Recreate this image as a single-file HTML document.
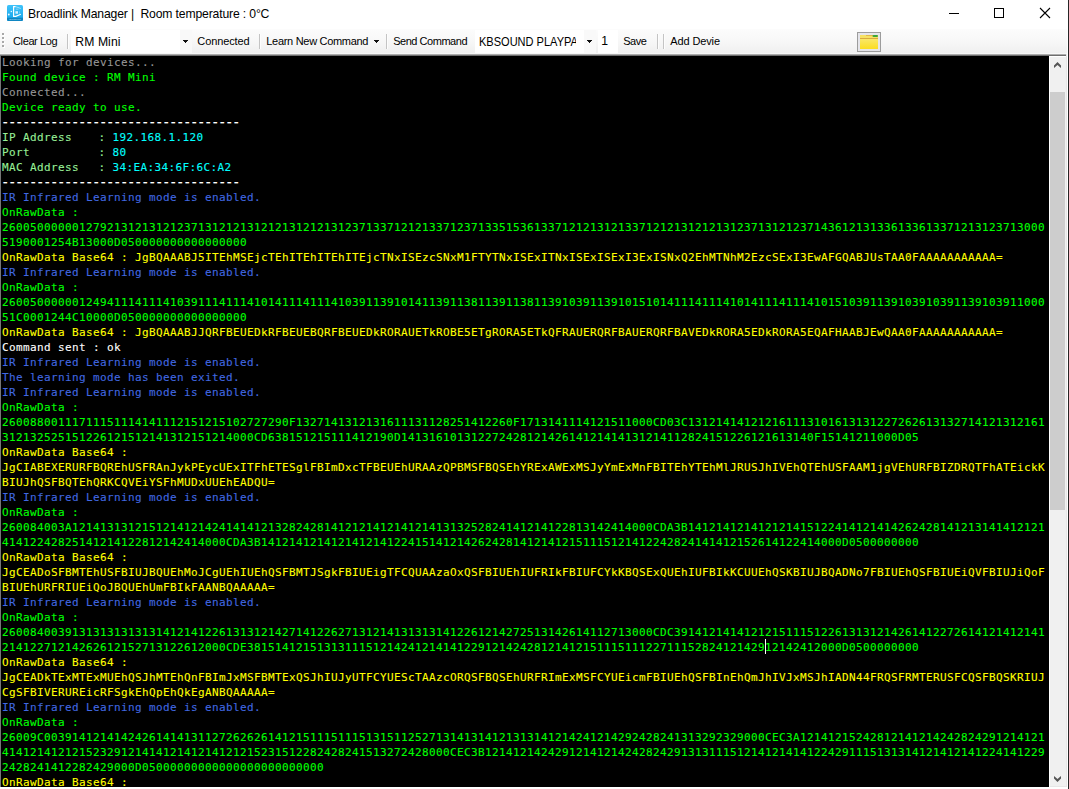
<!DOCTYPE html>
<html><head><meta charset="utf-8"><title>Broadlink Manager</title>
<style>
html,body{margin:0;padding:0;}
body{width:1069px;height:789px;overflow:hidden;background:#fff;position:relative;font-family:"Liberation Sans",sans-serif;font-size:12px;color:#000;}
.abs{position:absolute;}
#title{left:28.1px;top:7.2px;font-size:12.2px;white-space:pre;letter-spacing:-0.155px;line-height:15px;}
#tb{left:0;top:29px;width:1067px;height:24px;background:linear-gradient(#fcfcfc 0%,#f8f8f8 45%,#f0f0f0 100%);}
#tbline{left:0;top:53px;width:1067px;height:3px;background:linear-gradient(#f7f7f7 0,#f7f7f7 33.3%,#acacac 33.3%,#acacac 66.6%,#6e6e6e 66.6%);}
.ti{position:absolute;top:34px;line-height:14px;font-size:11px;white-space:pre;letter-spacing:-0.2px;}
.tc{font-size:12.2px;top:35px;letter-spacing:0}
.sep{position:absolute;top:34px;width:1px;height:15px;background:#c4c4c4;box-shadow:1px 0 0 #fdfdfd;}
.cb{position:absolute;top:30px;height:23px;background:#fff;}

#con{left:1px;top:56px;width:1048px;height:731px;background:#000;overflow:hidden;}
#txt{position:absolute;left:1px;top:-1px;font-family:"DejaVu Sans Mono","Liberation Mono",monospace;font-size:11px;letter-spacing:0.378px;line-height:15px;}
#txt div{height:15px;white-space:pre;-webkit-text-stroke:0.1px currentColor;}
.t{display:inline-block;width:96.5px}
#txt div.d{font-size:14px;letter-spacing:-1.428px;position:relative;top:0.2px;left:-1px}
.s{color:#969696}.p{color:#98f098}.g{color:#00ff00}.w{color:#fff}.c{color:#00ffff}.b{color:#4169e1}.y{color:#ffff00}
#sb{left:1050px;top:57px;width:16px;height:730px;background:#f0f0f0;}
#thumb{left:1050px;top:92px;width:15px;height:418px;background:#cdcdcd;}
</style></head><body>
<!-- title bar -->
<svg class="abs" style="left:7px;top:5px" width="16" height="16" viewBox="0 0 16 16">
<defs><linearGradient id="ig" x1="0" y1="0" x2="0" y2="1"><stop offset="0" stop-color="#3fc3fa"/><stop offset="1" stop-color="#15a3e8"/></linearGradient></defs>
<rect x="0" y="0" width="16" height="16" rx="1.6" fill="url(#ig)"/>
<path d="M0 12.7 H16 V14.4 Q16 16 14.4 16 H1.6 Q0 16 0 14.4 Z" fill="#0f86c2"/>
<text x="8" y="15.1" font-family="Liberation Sans,sans-serif" font-size="2.3" font-weight="bold" fill="#8fcdec" text-anchor="middle">BroadLink</text>
<path d="M8.6 1.6 H6.6 V11.4 H8.8 L13.8 9.3" fill="none" stroke="#fff" stroke-width="1.15"/>
<path d="M8.6 1.6 L13.8 3.5" fill="none" stroke="#d4f0fd" stroke-width="0.7"/>
<path d="M8.8 4.2 H11.5" stroke="#bfe8fb" stroke-width="0.6"/>
<rect x="8.4" y="6.2" width="2.6" height="2.5" fill="#d6f1fe"/>
<path d="M12.6 6.3 V8.6" stroke="#9fdcf8" stroke-width="0.6"/>
<circle cx="4.3" cy="6.6" r="0.75" fill="#e8f7fe"/>
<circle cx="1.8" cy="9.5" r="0.9" fill="#f2fbff"/>
</svg>
<div id="title" class="abs">Broadlink Manager |  Room temperature : 0°C</div>
<svg class="abs" style="left:940px;top:0" width="129" height="28" viewBox="0 0 129 28">
<path d="M9 13.5 H19" stroke="#000" stroke-width="1"/>
<rect x="54.5" y="8.5" width="9" height="9" fill="none" stroke="#000" stroke-width="1"/>
<path d="M100 8 L110 18 M110 8 L100 18" stroke="#000" stroke-width="1.1"/>
</svg>
<!-- toolbar -->
<div id="tb" class="abs"></div>
<div id="tbline" class="abs"></div>
<svg class="abs" style="left:2px;top:33px" width="4" height="16"><g fill="#fff"><rect x="1" y="1" width="2" height="2"/><rect x="1" y="5" width="2" height="2"/><rect x="1" y="9" width="2" height="2"/><rect x="1" y="13" width="2" height="2"/></g><g fill="#a8a8a8"><rect x="0" y="0" width="2" height="2"/><rect x="0" y="4" width="2" height="2"/><rect x="0" y="8" width="2" height="2"/><rect x="0" y="12" width="2" height="2"/></g></svg>
<div class="ti" style="left:13px;letter-spacing:-0.375px">Clear Log</div>
<div class="sep" style="left:67px"></div>
<div class="cb" style="left:71px;width:109px"></div><div class="cb" style="left:180px;width:12px;background:#f9f9f9"></div>
<div class="ti tc" style="left:75.3px;letter-spacing:0.08px">RM Mini</div>
<svg class="abs" style="left:183px;top:40px" width="5" height="3"><rect x="0" y="0" width="5" height="1" fill="#111"/><rect x="1" y="1" width="3" height="1" fill="#111"/><rect x="2" y="2" width="1" height="1" fill="#111"/></svg>
<div class="ti" style="left:197.3px;letter-spacing:-0.11px">Connected</div>
<div class="sep" style="left:259px"></div>
<div class="ti" style="left:266.3px;letter-spacing:-0.3px">Learn New Command</div>
<svg class="abs" style="left:374px;top:40px" width="5" height="3"><rect x="0" y="0" width="5" height="1" fill="#111"/><rect x="1" y="1" width="3" height="1" fill="#111"/><rect x="2" y="2" width="1" height="1" fill="#111"/></svg>
<div class="sep" style="left:386px"></div>
<div class="ti" style="left:393.2px;letter-spacing:-0.47px">Send Command</div>
<div class="cb" style="left:475px;width:109px"></div><div class="cb" style="left:584px;width:12px;background:#f9f9f9"></div>
<div class="ti tc" style="left:479.3px;width:97px;overflow:hidden"><span style="display:inline-block;transform:scaleX(0.905);transform-origin:0 0">KBSOUND PLAYPA</span></div>
<svg class="abs" style="left:587px;top:40px" width="5" height="3"><rect x="0" y="0" width="5" height="1" fill="#111"/><rect x="1" y="1" width="3" height="1" fill="#111"/><rect x="2" y="2" width="1" height="1" fill="#111"/></svg>
<div class="cb" style="left:598px;width:20px"></div>
<div class="ti tc" style="left:601.2px;top:34px">1</div>
<div class="ti" style="left:623.2px;letter-spacing:-0.43px">Save</div>
<div class="sep" style="left:657px"></div>
<div class="sep" style="left:663px"></div>
<div class="ti" style="left:670.3px;letter-spacing:-0.125px">Add Devie</div>
<svg class="abs" style="left:857px;top:32px" width="24" height="20" viewBox="0 0 24 20">
<defs><linearGradient id="fg" x1="0" y1="0" x2="0" y2="1"><stop offset="0" stop-color="#f9ec84"/><stop offset="1" stop-color="#fbdd22"/></linearGradient></defs>
<rect x="0.5" y="0.5" width="23" height="19" fill="#e5e5ea" stroke="#9c9c9c"/>
<rect x="3" y="3" width="18" height="14" fill="url(#fg)"/>
<rect x="3" y="3" width="18" height="3" fill="#f6e163"/>
<rect x="9" y="3" width="7" height="1" fill="#e0b84a"/>
<rect x="15.5" y="3" width="5.5" height="2" rx="1" fill="#3da63a"/>
<rect x="3" y="6" width="18" height="1" fill="#d9a93f"/>
</svg>
<!-- console -->
<div id="con" class="abs"><div id="txt">
<div class="s">Looking for devices...</div>
<div class="g">Found device : RM Mini</div>
<div class="s">Connected...</div>
<div class="g">Device ready to use.</div>
<div class="w d">----------------------------------</div>
<div class="p"><span class="t">IP Address</span>: <span class="c">192.168.1.120</span></div>
<div class="p"><span class="t">Port</span>: <span class="c">80</span></div>
<div class="p"><span class="t">MAC Address</span>: <span class="c">34:EA:34:6F:6C:A2</span></div>
<div class="w d">----------------------------------</div>
<div class="b">IR Infrared Learning mode is enabled.</div>
<div class="g">OnRawData : </div>
<div class="g">26005000000127921312131212371312121312121312121312371337121213371237133515361337121213121337121213121213123713121237143612131336133613371213123713000</div>
<div class="g">5190001254B13000D050000000000000000</div>
<div class="y">OnRawData Base64 : JgBQAAABJ5ITEhMSEjcTEhITEhITEhITEjcTNxISEzcSNxM1FTYTNxISExITNxISExISExI3ExISNxQ2EhMTNhM2EzcSExI3EwAFGQABJUsTAA0FAAAAAAAAAAA=</div>
<div class="b">IR Infrared Learning mode is enabled.</div>
<div class="g">OnRawData : </div>
<div class="g">26005000000124941114111410391114111410141114111410391139101411391138113911381139103911391015101411141114101411141114101510391139103910391139103911000</div>
<div class="g">51C0001244C10000D050000000000000000</div>
<div class="y">OnRawData Base64 : JgBQAAABJJQRFBEUEDkRFBEUEBQRFBEUEDkRORAUETkROBE5ETgRORA5ETkQFRAUERQRFBAUERQRFBAVEDkRORA5EDkRORA5EQAFHAABJEwQAA0FAAAAAAAAAAA=</div>
<div class="w">Command sent : ok</div>
<div class="b">IR Infrared Learning mode is enabled.</div>
<div class="b">The learning mode has been exited.</div>
<div class="b">IR Infrared Learning mode is enabled.</div>
<div class="g">OnRawData : </div>
<div class="g">26008800111711151114141112151215102727290F1327141312131611131128251412260F1713141114121511000CD03C131214141212161113101613131227262613132714121312161</div>
<div class="g">312132525151226121512141312151214000CD638151215111412190D14131610131227242812142614121414131214112824151226121613140F15141211000D05</div>
<div class="y">OnRawData Base64 : </div>
<div class="y">JgCIABEXERURFBQREhUSFRAnJykPEycUExITFhETESglFBImDxcTFBEUEhURAAzQPBMSFBQSEhYRExAWExMSJyYmExMnFBITEhYTEhMlJRUSJhIVEhQTEhUSFAAM1jgVEhURFBIZDRQTFhATEickK</div>
<div class="y">BIUJhQSFBQTEhQRKCQVEiYSFhMUDxUUEhEADQU=</div>
<div class="b">IR Infrared Learning mode is enabled.</div>
<div class="g">OnRawData : </div>
<div class="g">260084003A12141313121512141214241414121328242814121214121412141313252824141214122813142414000CDA3B141214121412121415122414121414262428141213141412121</div>
<div class="g">41412242825141214122812142414000CDA3B14121412141214121412241514121426242814121412151115121412242824141412152614122414000D0500000000</div>
<div class="y">OnRawData Base64 : </div>
<div class="y">JgCEADoSFBMTEhUSFBIUJBQUEhMoJCgUEhIUEhQSFBMTJSgkFBIUEigTFCQUAAzaOxQSFBIUEhIUFRIkFBIUFCYkKBQSExQUEhIUFBIkKCUUEhQSKBIUJBQADNo7FBIUEhQSFBIUEiQVFBIUJiQoF</div>
<div class="y">BIUEhURFRIUEiQoJBQUEhUmFBIkFAANBQAAAAA=</div>
<div class="b">IR Infrared Learning mode is enabled.</div>
<div class="g">OnRawData : </div>
<div class="g">260084003913131313131314121412261313121427141226271312141313131412261214272513142614112713000CDC39141214141212151115122613131214261412272614121412141</div>
<div class="g">21412271214262612152713122612000CDE3815141215131311151214241214141229121424281214121511151112271115282412142912142412000D0500000000</div>
<div class="y">OnRawData Base64 : </div>
<div class="y">JgCEADkTExMTExMUEhQSJhMTEhQnFBImJxMSFBMTExQSJhIUJyUTFCYUEScTAAzcORQSFBQSEhURFRImExMSFCYUEicmFBIUEhQSFBInEhQmJhIVJxMSJhIADN44FRQSFRMTERUSFCQSFBQSKRIUJ</div>
<div class="y">CgSFBIVERUREicRFSgkEhQpEhQkEgANBQAAAAA=</div>
<div class="b">IR Infrared Learning mode is enabled.</div>
<div class="g">OnRawData : </div>
<div class="g">26009C0039141214142426141413112726262614121511151115131511252713141314121313141214241214292428241313292329000CEC3A12141215242812141214242824291214121</div>
<div class="g">4141214121215232912141412141214121215231512282428241513272428000CEC3B12141214242912141214242824291313111512141214141224291115131314121412141224141229</div>
<div class="g">2428241412282429000D05000000000000000000000000</div>
<div class="y">OnRawData Base64 : </div>
</div>
<div class="abs" style="left:764px;top:583px;width:1px;height:15px;background:#fff"></div>
</div>
<div class="abs" style="left:1049px;top:56px;width:18px;height:731px;background:#fff"></div>
<div id="sb" class="abs"></div>
<div id="thumb" class="abs"></div>
<svg class="abs" style="left:1050px;top:56px" width="16" height="17" viewBox="0 0 16 17"><path d="M7.5 6 L11 9.5 V12 L7.5 9 L4 12 V9.5 Z" fill="#555"/></svg>
<svg class="abs" style="left:1050px;top:770px" width="16" height="17" viewBox="0 0 16 17"><path d="M7.5 12 L11 8.5 V6 L7.5 9 L4 6 V8.5 Z" fill="#555"/></svg>
<div class="abs" style="left:1050px;top:786px;width:17px;height:1px;background:#e6e6e6"></div>
<div class="abs" style="left:0;top:55px;width:1px;height:732px;background:#767676"></div>
<!-- window right edge -->
<div class="abs" style="left:1066px;top:54px;width:1px;height:733px;background:#e6e6e6"></div>
<div class="abs" style="left:1067px;top:0;width:1px;height:789px;background:#fff"></div>
<div class="abs" style="left:1068px;top:0;width:1px;height:789px;background:#262626"></div>
</body></html>
